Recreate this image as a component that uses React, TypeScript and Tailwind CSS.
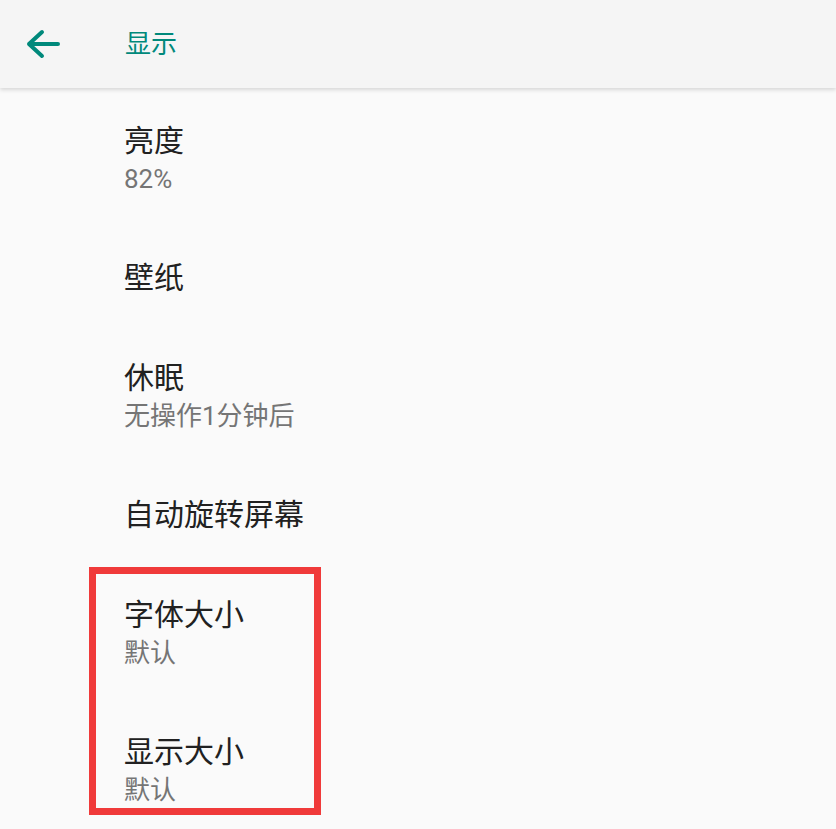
import React from "react";

type Setting = {
  title: string;
  summary?: string;
};

const settings: Setting[] = [
  { title: "亮度", summary: "82%" },
  { title: "壁纸" },
  { title: "休眠", summary: "无操作1分钟后" },
  { title: "自动旋转屏幕" },
  { title: "字体大小", summary: "默认" },
  { title: "显示大小", summary: "默认" },
];

const BackArrow = () => (
  <svg width="36" height="36" viewBox="0 0 36 36" fill="none">
    <path
      d="M4 14H33M17 2L4 14L17 26"
      stroke="#00897b"
      strokeWidth="4"
      strokeLinecap="round"
      strokeLinejoin="round"
      transform="translate(0 4)"
    />
  </svg>
);

export default function App() {
  return (
    <div
      className="relative w-[836px] h-[829px] overflow-hidden bg-[#fafafa]"
      style={{ fontFamily: 'Roboto, "Noto Sans CJK SC", sans-serif' }}
    >
      {/* toolbar */}
      <div className="relative z-10 h-[88px] bg-[#f5f5f5] flex items-center shadow-[0_2px_4px_rgba(0,0,0,0.14)]">
        <div className="w-[125px] pl-[25px] flex items-center">
          <BackArrow />
        </div>
        <span className="text-[26px] leading-none text-[#00897b]">显示</span>
      </div>

      {/* list */}
      <div className="pt-[3px]">
        {settings.map((s) => (
          <div key={s.title} className="pl-[124px] py-[30px] flex flex-col">
            <span className="text-[30px] leading-[40px] text-[#212121]">
              {s.title}
            </span>
            {s.summary && (
              <span className="text-[26px] leading-[37px] text-[#757575]">
                {s.summary}
              </span>
            )}
          </div>
        ))}
      </div>

      {/* highlight box */}
      <div className="absolute left-[89px] top-[567px] w-[232px] h-[248px] border-[7px] border-[#f03a3a]" />
    </div>
  );
}
